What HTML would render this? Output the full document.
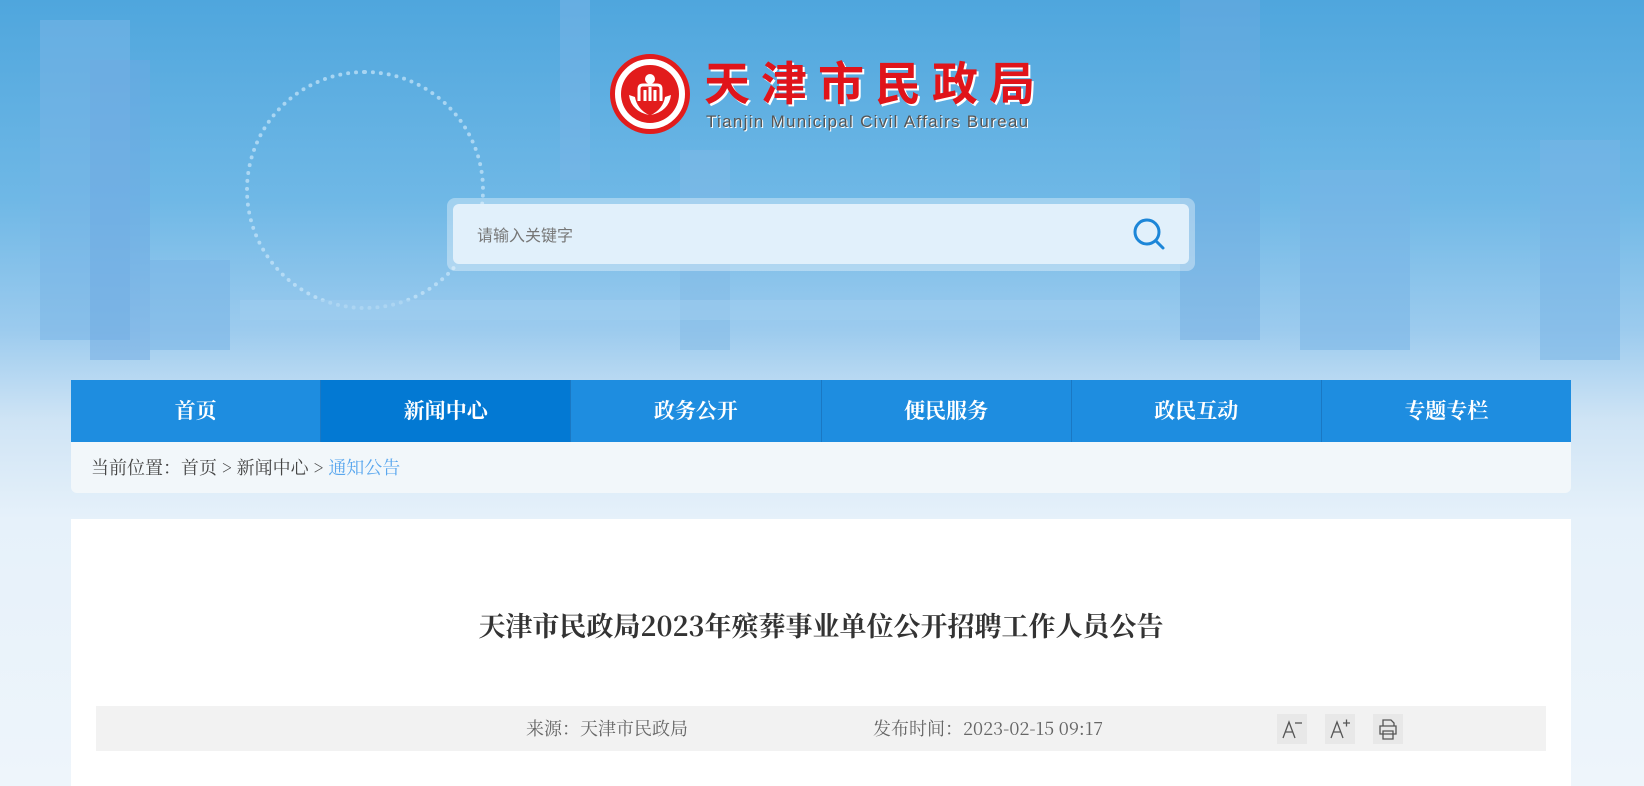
<!DOCTYPE html>
<html style="background:#eef5fb;overflow:hidden"><head><meta charset="utf-8"><style>
*{margin:0;padding:0;box-sizing:border-box}
html,body{width:1644px;height:786px;overflow:hidden}
body{position:relative;font-family:"Liberation Serif","Noto Serif CJK SC",serif;
background:linear-gradient(180deg,#4fa6dd 0px,#6fb8e6 200px,#9ccbee 330px,#cfe4f5 420px,#e6f1fa 520px,#eef5fb 786px);}
.bld{position:absolute;background:rgba(120,180,230,.55)}
.logo{position:absolute;left:610px;top:54px;width:80px;height:80px;border-radius:50%;background:#fff;border:5px solid #e21c1c}
.logo .in{position:absolute;left:6px;top:6px;width:58px;height:58px;border-radius:50%;background:#e21c1c}
.t1{position:absolute;left:704px;top:48px;font:bold 46px "Noto Sans CJK SC",sans-serif;color:#e0141a;letter-spacing:11px;text-shadow:2px 2px 0 #fff}
.t2{position:absolute;left:706px;top:112px;font:17px "Liberation Sans",sans-serif;color:#555;letter-spacing:1.3px;text-shadow:1px 1px 0 #fff}
.search{position:absolute;left:447px;top:198px;width:748px;height:73px;border-radius:8px;background:rgba(255,255,255,.35)}
.search .box{position:absolute;left:6px;top:6px;right:6px;bottom:7px;border-radius:6px;background:#e1f0fb}
.search span{position:absolute;left:24px;top:18px;font:16px "Noto Sans CJK SC",sans-serif;color:#777}
.nav{position:absolute;left:71px;top:380px;width:1500px;height:62px;background:#1e8de0;display:flex}
.nav div{flex:1;color:#fff;font:bold 21px "Noto Serif CJK SC",serif;text-align:center;line-height:60px;border-left:1px solid #1a78c4}
.nav div:first-child{border-left:none}
.nav .on{background:#0379d3}
.crumb{position:absolute;left:71px;top:442px;width:1500px;height:51px;background:#f2f7fa;border-radius:0 0 6px 6px;padding-left:20px;line-height:50px;font-size:18px;color:#444;font-family:"Noto Serif CJK SC",serif}
.crumb b{font-weight:normal;color:#5aa7ee}
.main{position:absolute;left:71px;top:519px;width:1500px;height:280px;background:#fff}
.title{position:absolute;left:0;width:1500px;top:86px;text-align:center;font:bold 27px "Noto Serif CJK SC",serif;color:#333}
.meta{position:absolute;left:25px;top:187px;width:1450px;height:45px;background:#f2f2f2;font:18px "Noto Serif CJK SC",serif;color:#666;line-height:45px}
.ic{position:absolute;top:8px;width:30px;height:30px;background:#e8e8e8}
</style></head><body>
<div class="bld" style="left:40px;top:20px;width:90px;height:320px"></div>
<div class="bld" style="left:90px;top:60px;width:60px;height:300px;background:rgba(110,170,225,.5)"></div>
<div class="bld" style="left:150px;top:260px;width:80px;height:90px"></div>
<div class="bld" style="left:560px;top:0;width:30px;height:180px"></div>
<div class="bld" style="left:680px;top:150px;width:50px;height:200px;background:rgba(130,185,230,.5)"></div>
<div class="bld" style="left:1180px;top:0;width:80px;height:340px;background:rgba(110,170,225,.45)"></div>
<div class="bld" style="left:1300px;top:170px;width:110px;height:180px"></div>
<div class="bld" style="left:1540px;top:140px;width:80px;height:220px"></div>
<div style="position:absolute;left:245px;top:70px;width:240px;height:240px;border-radius:50%;border:4px dotted rgba(200,230,250,.7)"></div>
<div style="position:absolute;left:240px;top:300px;width:920px;height:20px;background:rgba(160,205,240,.5)"></div>
<div class="logo"><div class="in"></div>
<svg style="position:absolute;left:6px;top:6px" width="58" height="58" viewBox="0 0 58 58"><circle cx="29" cy="14" r="5" fill="#fff"/><path d="M18 36 V24 Q18 20 22 20 H36 Q40 20 40 24 V36 M24 36 V25 M29 36 V22 M34 36 V25" fill="none" stroke="#fff" stroke-width="3"/><path d="M8 30 Q10 46 28 50 Q16 44 14 32 Z M50 30 Q48 46 30 50 Q42 44 44 32 Z" fill="#fff"/></svg></div>
<div class="t1">天津市民政局</div>
<div class="t2">Tianjin Municipal Civil Affairs Bureau</div>
<div class="search"><div class="box"><span>请输入关键字</span>
<svg style="position:absolute;right:20px;top:10px" width="40" height="40" viewBox="0 0 40 40"><circle cx="18" cy="18" r="12" fill="none" stroke="#1c86d8" stroke-width="3"/><line x1="27" y1="27" x2="34" y2="34" stroke="#1c86d8" stroke-width="3" stroke-linecap="round"/></svg></div></div>
<div class="nav"><div>首页</div><div class="on">新闻中心</div><div>政务公开</div><div>便民服务</div><div>政民互动</div><div>专题专栏</div></div>
<div class="crumb">当前位置：首页 &gt; 新闻中心 &gt; <b>通知公告</b></div>
<div class="main">
<div class="title">天津市民政局2023年殡葬事业单位公开招聘工作人员公告</div>
<div class="meta"><span style="position:absolute;left:430px">来源：天津市民政局</span><span style="position:absolute;left:777px">发布时间：2023-02-15 09:17</span>
<div class="ic" style="left:1181px"><svg width="30" height="30"><path d="M6 24 L12 8 L18 24 M8.5 18 H15.5" fill="none" stroke="#555" stroke-width="1.3"/><line x1="18" y1="9" x2="25" y2="9" stroke="#555" stroke-width="1.3"/></svg></div>
<div class="ic" style="left:1229px"><svg width="30" height="30"><path d="M6 24 L12 8 L18 24 M8.5 18 H15.5" fill="none" stroke="#555" stroke-width="1.3"/><path d="M18 9 H25 M21.5 5.5 V12.5" stroke="#555" stroke-width="1.3"/></svg></div>
<div class="ic" style="left:1277px"><svg width="30" height="30"><path d="M10 12 V6 H18 L21 9 V12 M7 12 H23 V20 H7 Z M10 17 H20 V25 H10 Z" fill="none" stroke="#555" stroke-width="1.3"/></svg></div>
</div>
</div>
</body></html>
